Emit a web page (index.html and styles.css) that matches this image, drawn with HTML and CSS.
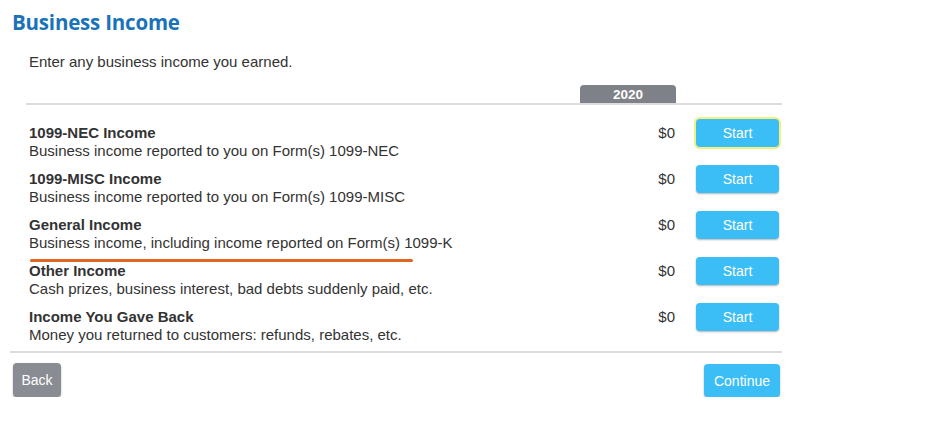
FILE: index.html
```html
<!DOCTYPE html>
<html lang="en">
<head>
  <meta charset="UTF-8" />
  <meta name="viewport" content="width=device-width, initial-scale=1.0"/>
  <title>Business Income</title>
  <link rel="stylesheet" href="styles.css">
</head>
<body>
  <div class="page">
    <h1 class="page-title">Business Income</h1>

    <div class="income-form">
      <p class="intro">Enter any business income you earned.</p>

      <div class="year-head">
        <span class="year-tab">2020</span>
      </div>

      <div class="income-list">
        <div class="income-row">
          <div class="income-text">
            <div class="income-name">1099-NEC Income</div>
            <div class="income-desc">Business income reported to you on Form(s) 1099-NEC</div>
          </div>
          <div class="income-amount">$0</div>
          <button type="button" class="btn btn-start focused">Start</button>
        </div>

        <div class="income-row">
          <div class="income-text">
            <div class="income-name">1099-MISC Income</div>
            <div class="income-desc">Business income reported to you on Form(s) 1099-MISC</div>
          </div>
          <div class="income-amount">$0</div>
          <button type="button" class="btn btn-start">Start</button>
        </div>

        <div class="income-row marked">
          <div class="income-text">
            <div class="income-name">General Income</div>
            <div class="income-desc">Business income, including income reported on Form(s) 1099-K</div>
          </div>
          <div class="income-amount">$0</div>
          <button type="button" class="btn btn-start">Start</button>
        </div>

        <div class="income-row">
          <div class="income-text">
            <div class="income-name">Other Income</div>
            <div class="income-desc">Cash prizes, business interest, bad debts suddenly paid, etc.</div>
          </div>
          <div class="income-amount">$0</div>
          <button type="button" class="btn btn-start">Start</button>
        </div>

        <div class="income-row">
          <div class="income-text">
            <div class="income-name">Income You Gave Back</div>
            <div class="income-desc">Money you returned to customers: refunds, rebates, etc.</div>
          </div>
          <div class="income-amount">$0</div>
          <button type="button" class="btn btn-start">Start</button>
        </div>
      </div>
    </div>

    <div class="form-actions">
      <button type="button" class="btn btn-back">Back</button>
      <button type="button" class="btn btn-continue">Continue</button>
    </div>
  </div>
</body>
</html>
```

FILE: styles.css
```css
* {
  box-sizing: border-box;
}

body {
  margin: 0;
  background: #fff;
  font-family: "Liberation Sans", Arial, sans-serif;
  font-size: 15px;
  color: #333;
}

.page {
  width: 792px;
  padding: 8px 10px 0 10px;
}

.page-title {
  margin: 0 0 0 2px;
  font-family: "Open Sans", sans-serif;
  font-weight: 700;
  font-size: 20.5px;
  line-height: 28px;
  color: #1a73b9;
  letter-spacing: -0.2px;
}

.income-form {
  border-bottom: 2px solid #ddd;
}

.intro {
  margin: 17px 0 0 19px;
  line-height: 18px;
}

.year-head {
  display: flex;
  justify-content: flex-end;
  margin: 14px 0 0 16px;
  padding-right: 106px;
  border-bottom: 2px solid #ddd;
}

.year-tab {
  width: 96px;
  height: 18px;
  line-height: 19px;
  background: #7f8189;
  color: #fff;
  font-weight: 700;
  font-size: 13.5px;
  text-align: center;
  border-radius: 4px 4px 0 0;
}

.income-list {
  margin-left: 16px;
  padding: 14px 0 2px 0;
}

.income-row {
  position: relative;
  display: flex;
  align-items: flex-start;
  height: 46px;
}

.income-text {
  flex: 1;
  padding: 5px 0 0 3px;
  line-height: 18px;
}

.income-name {
  font-weight: 700;
}

.income-amount {
  width: 96px;
  padding: 5px 1px 0 0;
  line-height: 18px;
  text-align: right;
}

/* hand-drawn highlight under the General Income row */
.income-row.marked::after {
  content: "";
  position: absolute;
  left: 4px;
  top: 48px;
  width: 383px;
  height: 3px;
  border-radius: 2px;
  background: #e2661f;
}

.btn {
  border: none;
  border-radius: 4px;
  color: #fff;
  font-family: "Liberation Sans", Arial, sans-serif;
  font-size: 14px;
  cursor: pointer;
  box-shadow: 0 1px 2px rgba(0,0,0,0.3);
}

.btn-start {
  width: 83px;
  height: 28px;
  margin: 0 3px 0 20px;
  background: #3bbdf6;
}

.btn-start.focused {
  box-shadow: 0 0 0 2px #f3f07c, 0 1px 2px rgba(0,0,0,0.3);
}

.form-actions {
  display: flex;
  justify-content: space-between;
  align-items: flex-start;
  padding: 10px 2px 0 3px;
}

.btn-back {
  width: 48px;
  height: 34px;
  background: #8a8c94;
}

.btn-continue {
  width: 76px;
  height: 33px;
  margin-top: 1px;
  background: #3bbdf6;
}
```
